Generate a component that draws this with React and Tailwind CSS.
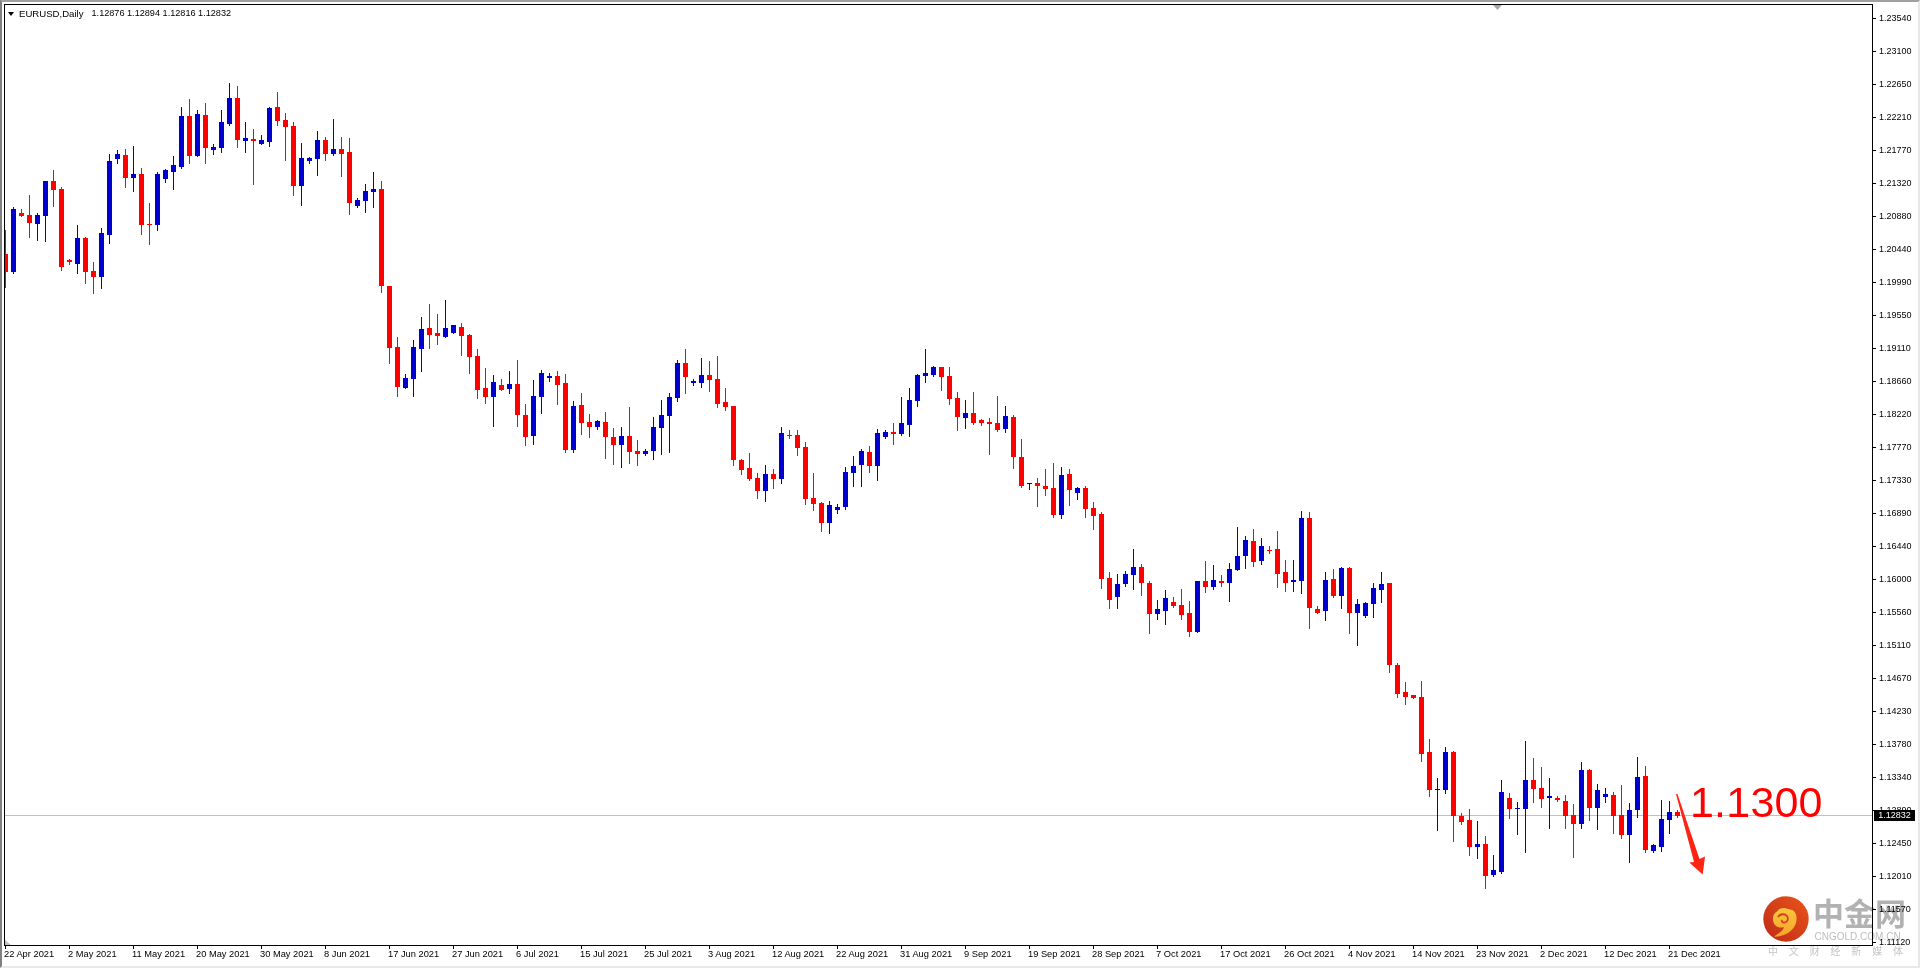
import React from 'react'

const prices = ['1.23540', '1.23100', '1.22650', '1.22210', '1.21770', '1.21320', '1.20880', '1.20440', '1.19990', '1.19550', '1.19110', '1.18660', '1.18220', '1.17770', '1.17330', '1.16890', '1.16440', '1.16000', '1.15560', '1.15110', '1.14670', '1.14230', '1.13780', '1.13340', '1.12890', '1.12450', '1.12010', '1.11570', '1.11120']

const dates = ['22 Apr 2021', '2 May 2021', '11 May 2021', '20 May 2021', '30 May 2021', '8 Jun 2021', '17 Jun 2021', '27 Jun 2021', '6 Jul 2021', '15 Jul 2021', '25 Jul 2021', '3 Aug 2021', '12 Aug 2021', '22 Aug 2021', '31 Aug 2021', '9 Sep 2021', '19 Sep 2021', '28 Sep 2021', '7 Oct 2021', '17 Oct 2021', '26 Oct 2021', '4 Nov 2021', '14 Nov 2021', '23 Nov 2021', '2 Dec 2021', '12 Dec 2021', '21 Dec 2021']

// colour, wick top, body top, body bottom, wick bottom (page pixels)
const candles = [
  ['r', 230, 254, 272, 287], ['b', 207, 209, 272, 273], ['r', 209, 213, 216, 216], ['r', 195, 215, 223, 237], ['b', 213, 215, 224, 240],
  ['b', 181, 181, 216, 241], ['r', 170, 181, 190, 206], ['r', 187, 189, 267, 270], ['r', 259, 260, 262, 264], ['b', 225, 238, 264, 273],
  ['r', 237, 238, 272, 283], ['r', 262, 271, 277, 293], ['b', 228, 233, 277, 288], ['b', 154, 161, 235, 243], ['b', 150, 154, 159, 163],
  ['r', 149, 155, 178, 187], ['b', 146, 174, 178, 191], ['r', 168, 174, 225, 234], ['r', 203, 224, 225, 244], ['b', 172, 174, 225, 230],
  ['b', 169, 170, 179, 182], ['b', 156, 165, 172, 189], ['b', 107, 116, 167, 168], ['r', 99, 116, 156, 163], ['b', 110, 114, 156, 156],
  ['r', 103, 115, 148, 163], ['b', 144, 147, 150, 154], ['b', 110, 122, 148, 152], ['b', 83, 98, 124, 125], ['r', 86, 98, 140, 147],
  ['b', 122, 138, 141, 152], ['r', 129, 139, 141, 184], ['b', 135, 140, 144, 144], ['b', 107, 108, 142, 146], ['r', 92, 107, 121, 125],
  ['r', 113, 120, 127, 160], ['r', 122, 126, 186, 195], ['b', 143, 158, 186, 205], ['b', 157, 158, 161, 163], ['b', 131, 140, 159, 175],
  ['r', 137, 140, 154, 160], ['b', 119, 149, 154, 155], ['r', 137, 149, 154, 176], ['r', 138, 152, 203, 214], ['b', 198, 200, 206, 207],
  ['b', 184, 191, 201, 212], ['b', 172, 189, 192, 207], ['r', 181, 189, 286, 292], ['r', 286, 286, 348, 363], ['r', 337, 347, 387, 396],
  ['b', 374, 378, 388, 388], ['b', 340, 347, 379, 396], ['b', 317, 329, 349, 371], ['r', 304, 328, 335, 348], ['r', 314, 333, 336, 344],
  ['b', 300, 328, 337, 337], ['b', 325, 325, 333, 333], ['r', 323, 327, 336, 355], ['r', 334, 335, 357, 373], ['r', 349, 356, 390, 398],
  ['r', 368, 388, 397, 403], ['b', 375, 382, 397, 426], ['r', 379, 385, 390, 390], ['b', 371, 384, 389, 393], ['r', 360, 384, 415, 426],
  ['r', 404, 415, 437, 445], ['b', 380, 396, 436, 444], ['b', 370, 373, 397, 413], ['b', 373, 376, 378, 381], ['r', 371, 376, 385, 404],
  ['r', 374, 383, 450, 452], ['b', 401, 406, 450, 452], ['r', 393, 405, 423, 434], ['r', 414, 422, 427, 437], ['b', 420, 421, 427, 429],
  ['r', 412, 422, 437, 458], ['r', 428, 437, 445, 464], ['b', 427, 436, 445, 467], ['r', 407, 436, 452, 463], ['r', 440, 451, 454, 465],
  ['b', 449, 451, 454, 455], ['b', 417, 427, 451, 459], ['b', 400, 415, 428, 454], ['b', 393, 397, 416, 452], ['b', 360, 363, 398, 401],
  ['r', 349, 363, 377, 393], ['b', 379, 381, 383, 385], ['b', 358, 375, 383, 387], ['r', 361, 375, 380, 391], ['r', 356, 379, 404, 407],
  ['r', 388, 402, 407, 410], ['r', 406, 406, 460, 465], ['r', 459, 460, 470, 474], ['r', 453, 468, 479, 480], ['r', 473, 478, 491, 498],
  ['b', 465, 474, 491, 501], ['r', 469, 474, 479, 488], ['b', 427, 433, 479, 483], ['r', 430, 435, 436, 438], ['r', 430, 435, 448, 455],
  ['r', 442, 447, 499, 504], ['r', 473, 498, 504, 510], ['r', 502, 503, 523, 531], ['b', 501, 505, 523, 533], ['b', 504, 507, 510, 513],
  ['b', 467, 472, 507, 509], ['b', 456, 466, 473, 486], ['b', 449, 451, 465, 486], ['r', 446, 452, 466, 472], ['b', 429, 433, 466, 480],
  ['b', 430, 432, 437, 438], ['r', 423, 432, 434, 444], ['b', 397, 423, 434, 435], ['b', 388, 400, 425, 436], ['b', 374, 375, 401, 406],
  ['b', 349, 373, 376, 382], ['b', 366, 367, 375, 376], ['r', 367, 367, 377, 390], ['r', 367, 376, 399, 404], ['r', 392, 398, 417, 430],
  ['b', 400, 413, 418, 428], ['r', 392, 413, 423, 424], ['r', 419, 420, 423, 425], ['r', 418, 422, 424, 454], ['r', 396, 423, 430, 431],
  ['b', 406, 416, 429, 432], ['r', 415, 417, 457, 468], ['r', 439, 457, 486, 487], ['b', 483, 483, 484, 489], ['r', 478, 483, 486, 506],
  ['r', 469, 486, 489, 495], ['r', 463, 488, 515, 517], ['b', 467, 475, 515, 518], ['r', 469, 474, 490, 505], ['b', 487, 488, 493, 499],
  ['r', 486, 488, 509, 517], ['r', 502, 508, 516, 529], ['r', 512, 514, 579, 588], ['r', 572, 578, 600, 608], ['b', 574, 584, 597, 608],
  ['b', 571, 574, 584, 586], ['b', 549, 567, 575, 589], ['r', 564, 567, 583, 595], ['r', 581, 583, 614, 633], ['b', 600, 609, 614, 619],
  ['b', 590, 598, 611, 624], ['r', 597, 602, 606, 607], ['r', 589, 605, 615, 619], ['r', 601, 613, 632, 636], ['b', 581, 581, 632, 632],
  ['r', 561, 581, 587, 592], ['b', 565, 580, 587, 589], ['r', 575, 581, 583, 586], ['b', 563, 569, 583, 601], ['b', 527, 556, 570, 570],
  ['b', 536, 540, 556, 568], ['r', 529, 541, 562, 566], ['b', 538, 546, 561, 564], ['r', 546, 550, 551, 553], ['r', 531, 549, 574, 587],
  ['r', 560, 572, 583, 591], ['b', 560, 580, 582, 591], ['b', 511, 518, 581, 593], ['r', 512, 518, 608, 628], ['r', 606, 609, 613, 613],
  ['b', 572, 580, 611, 620], ['r', 569, 579, 596, 597], ['b', 567, 568, 596, 608], ['r', 567, 568, 613, 633], ['b', 599, 604, 613, 645],
  ['b', 602, 603, 616, 617], ['b', 583, 588, 604, 617], ['b', 572, 584, 590, 602], ['r', 583, 583, 665, 672], ['r', 663, 665, 694, 697],
  ['r', 682, 692, 697, 704], ['r', 695, 695, 698, 698], ['r', 681, 697, 754, 761], ['r', 739, 752, 790, 796], ['b', 778, 789, 790, 830],
  ['b', 747, 752, 790, 793], ['r', 751, 752, 816, 841], ['r', 813, 816, 822, 824], ['r', 809, 820, 847, 855], ['b', 821, 844, 847, 858],
  ['r', 836, 844, 876, 888], ['b', 855, 870, 875, 876], ['b', 780, 792, 872, 873], ['r', 793, 798, 809, 818], ['b', 802, 808, 809, 834],
  ['b', 741, 780, 809, 852], ['r', 758, 780, 789, 802], ['r', 767, 788, 799, 807], ['b', 778, 796, 798, 828], ['r', 796, 798, 800, 801],
  ['r', 795, 801, 816, 828], ['r', 804, 815, 824, 857], ['b', 762, 770, 824, 828], ['r', 769, 770, 808, 820], ['b', 784, 790, 808, 829],
  ['b', 788, 794, 797, 802], ['r', 792, 795, 816, 833], ['r', 785, 815, 835, 838], ['b', 803, 810, 835, 862], ['b', 757, 777, 810, 817],
  ['r', 766, 776, 850, 852], ['b', 844, 845, 851, 852], ['b', 800, 819, 847, 851], ['b', 801, 812, 820, 833], ['r', 810, 812, 816, 817],
]

function CandleChart() {
  return (
    <svg className="block h-[940px] w-[1867px]" viewBox="5 5 1867 940">
      <g shapeRendering="crispEdges">
        <rect x="5" y="815" width="1867" height="1" fill="#c0c0c0" />
        {candles.map(([c, wt, bt, bb, wb], i) => (
          <g key={i} fill={c === 'r' ? '#ff0000' : '#0000cd'}>
            <rect x={5 + 8 * i} y={wt} width="1" height={wb - wt + 1} />
            <rect x={3 + 8 * i} y={bt} width="5" height={Math.max(bb - bt, 1)} />
          </g>
        ))}
      </g>
      <path d="M1493 5h9l-4.5 5z" fill="#a8a8a8" />
      <path d="M5 940l6 5H5z" fill="#c0c0c0" />
      <path d="M1676 794L1677.5 794L1699.5 859L1705 856.5L1702.7 874.5L1689.3 862.5L1694 862Z" fill="#ff2413" />
    </svg>
  )
}

function Logo() {
  return (
    <div className="absolute left-[1761px] top-[894px] flex items-start gap-[4px]">
      <svg className="h-[46px] w-[46px] shrink-0" viewBox="0 0 46 46">
        <defs>
          <linearGradient id="disc" x1="0" y1="1" x2="1" y2="0">
            <stop offset="0" stopColor="#bd2a18" />
            <stop offset="1" stopColor="#ea5518" />
          </linearGradient>
          <linearGradient id="cloud" x1="0" y1="0" x2="0" y2="1">
            <stop offset="0" stopColor="#fac63f" />
            <stop offset="1" stopColor="#f6a32a" />
          </linearGradient>
        </defs>
        <circle cx="23" cy="23" r="22.7" fill="url(#disc)" />
        <path d="M11 40.5C16 37 20 35 21 31C16 33 10.5 30 10 24C9.5 20 11 17 14 15.5C16 12 21 11 25 13C30 13 34 17 33.5 22C34 30 28 36 22 38.5C18 40 14 41 11 40.5Z" fill="url(#cloud)" />
        <path d="M15 21C17 17.5 22 17.5 24 20C26 23 24 27 20.5 26.5C19 26.3 18.5 25 19 24" fill="none" stroke="#d5401a" strokeWidth="1.8" />
      </svg>
      <div className="-mt-[2px] flex flex-col mix-blend-multiply">
        <div className="font-['Noto_Sans_CJK_SC',sans-serif] text-[31px] font-bold leading-[36px] text-[#b2b2b2]">中金网</div>
        <div className="ml-[1.5px] mt-[2px] text-[10px] leading-[10px] text-[#bdbdbd]">CNGOLD.COM.CN</div>
      </div>
      <div className="absolute left-[5px] top-[49px] flex w-[135px] justify-between font-['Noto_Sans_CJK_SC',sans-serif] text-[10px] leading-[12px] text-[#c4c4c4] mix-blend-multiply">
        {['中', '文', '财', '经', '新', '媒', '体'].map((t) => (
          <span key={t}>{t}</span>
        ))}
      </div>
    </div>
  )
}

export default function App() {
  return (
    <div className="relative flex h-[968px] w-[1920px] flex-col overflow-hidden border-t-2 border-r-2 border-b-2 border-l-2 border-t-[#a0a0a0] border-r-[#e8e8e8] border-b-[#e8e8e8] border-l-[#808080] bg-white pt-[2px] pl-[2px] font-['Liberation_Sans',Arial,sans-serif] text-[9px] text-black">
      <div className="flex h-[942px] shrink-0">
        <div className="relative h-[942px] w-[1869px] shrink-0 border border-black">
          <CandleChart />
          <div className="absolute left-[3px] top-[3px] flex items-center">
            <span className="h-0 w-0 border-x-[3.5px] border-t-[4px] border-x-transparent border-t-black" />
            <span className="ml-[5px] text-[9.6px] leading-[11px]">EURUSD,Daily</span>
            <span className="ml-[8px] text-[9.15px] leading-[11px]">1.12876 1.12894 1.12816 1.12832</span>
          </div>
          <div className="absolute left-[1685px] top-[773px] text-[43px] leading-[48px] tracking-[0.2px] text-[#ff0000]">1.1300</div>
        </div>
        <div className="relative flex w-[43px] shrink-0 flex-col">
          <div className="-mt-[2px] flex flex-col">
            {prices.map((p) => (
              <div key={p} className="flex h-[33px] shrink-0 items-center">
                <span className="h-px w-[3px] bg-black" />
                <span className="ml-[3px] leading-[11px]">{p}</span>
              </div>
            ))}
          </div>
          <div className="absolute left-[1px] top-[806px] flex h-[11px] w-[41px] items-center justify-center bg-black leading-[11px] text-white">1.12832</div>
        </div>
      </div>
      <div className="flex pl-px">
        {dates.map((d) => (
          <div key={d} className="flex w-[64px] shrink-0 flex-col">
            <span className="h-[3px] w-px bg-black" />
            <span className="-ml-px whitespace-nowrap text-[9.3px] leading-[11px]">{d}</span>
          </div>
        ))}
      </div>
      <Logo />
    </div>
  )
}
